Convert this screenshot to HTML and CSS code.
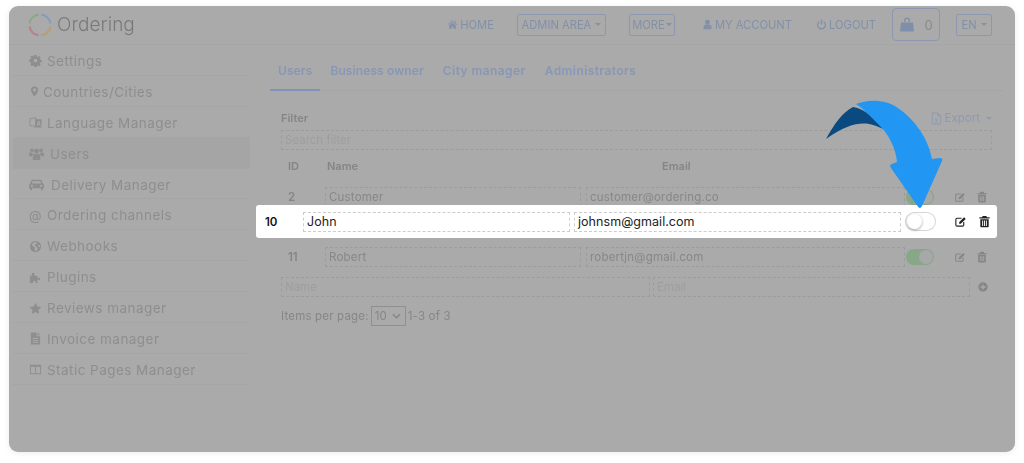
FILE: index.html
```html
<!DOCTYPE html>
<html lang="en">
<head>
<meta charset="utf-8">
<title>Ordering</title>
<link rel="stylesheet" href="styles.css">
</head>
<body>
<svg class="sprite" width="0" height="0">
  <symbol id="i-home" viewBox="0 0 14 14"><path d="M7 1.500 1 6.800l.7.800L7 3l5.300 4.600.7-.8-2-1.800V2.200H10v1.900zM2.800 8v4.500h3.200V9.500h2v3h3.200V8L7 4.300z"/></symbol>
  <symbol id="i-user" viewBox="0 0 14 14"><circle cx="7" cy="4" r="3"/><path d="M2 13V9.500C2 8 3.500 7 5 7h4c1.500 0 3 1 3 2.500V13z"/></symbol>
  <symbol id="i-power" viewBox="0 0 14 14"><path d="M6.100 1h1.800v6H6.100zM4.200 2.700v2A4 4 0 1 0 9.800 4.700v-2a5.700 5.700 0 1 1-5.600 0z"/></symbol>
  <symbol id="i-bag" viewBox="0 0 16 16"><path d="M5 5V3.500a3 3 0 0 1 6 0V5h-1.300V3.500a1.700 1.700 0 0 0-3.400 0V5zM2 5.500h12l1 9H1z"/></symbol>
  <symbol id="i-cog" viewBox="0 0 14 14"><path fill-rule="evenodd" d="M5.800 1h2.400l.3 1.700 1 .4 1.400-1 1.700 1.700-1 1.400.4 1 1.700.3v2.400l-1.700.3-.4 1 1 1.400-1.700 1.700-1.400-1-1 .4-.3 1.700H5.800l-.3-1.700-1-.4-1.400 1-1.700-1.700 1-1.400-.4-1L.3 8.200V5.800l1.700-.3.4-1-1-1.400 1.700-1.700 1.400 1 1-.4zM7 5a2 2 0 1 0 0 4 2 2 0 0 0 0-4z"/></symbol>
  <symbol id="i-pin" viewBox="0 0 14 14"><path fill-rule="evenodd" d="M7 .5a4.500 4.500 0 0 1 4.500 4.500C11.500 8 7 13.500 7 13.500S2.500 8 2.500 5A4.500 4.500 0 0 1 7 .5zM7 3a2 2 0 1 0 0 4 2 2 0 0 0 0-4z"/></symbol>
  <symbol id="i-lang" viewBox="0 0 16 14"><path d="M1 2.500 8 1v11L1 10.500z" fill="none" stroke="currentColor"/><path fill-rule="evenodd" d="M8 3h7.500v10H6.500l1-1.500zm3.300 2-2 6h1.300l.4-1.300h2l.4 1.300h1.300l-2-6zm.7 1.500.7 2.200h-1.400z"/></symbol>
  <symbol id="i-users" viewBox="0 0 16 14"><circle cx="8" cy="4.500" r="2.600"/><circle cx="3" cy="3.500" r="2"/><circle cx="13" cy="3.500" r="2"/><path d="M4 14V10c0-1.500 1-2.500 2.500-2.500h3C11 7.500 12 8.500 12 10v4zM0 9V7.500C0 6.500.8 6 1.800 6h1.700c.4 1 1 1.500 1.500 1.800C3.800 8.200 3.200 8.800 3 10H0zM16 9V7.500C16 6.500 15.200 6 14.200 6h-1.700c-.4 1-1 1.500-1.500 1.800 1.200.4 1.800 1 2 2.200h3z"/></symbol>
  <symbol id="i-car" viewBox="0 0 16 14"><path fill-rule="evenodd" d="M3.500 2h9c.6 0 1 .3 1.200.9L14.800 6c.7.3 1.200 1 1.200 1.800V11h-1.200v1.500a1 1 0 0 1-2 0V11H3.200v1.500a1 1 0 0 1-2 0V11H0V7.800C0 7 .5 6.300 1.200 6l1.100-3.100C2.500 2.300 2.900 2 3.500 2zM3.800 3.500 3 6h10l-.8-2.500zM3 7.300a1.200 1.200 0 1 0 0 2.400 1.200 1.200 0 0 0 0-2.400zm10 0a1.200 1.200 0 1 0 0 2.400 1.200 1.200 0 0 0 0-2.400z"/></symbol>
  <symbol id="i-globe" viewBox="0 0 14 14"><path fill-rule="evenodd" d="M7 1a6 6 0 1 1 0 12A6 6 0 0 1 7 1zM4 3.500 3 5.500l2 1.500 1.500 1-.5 3 2 1 1.500-3-2-2L6 5l2-1 1-1.500C7 2 5 2.500 4 3.500zM10 5l-.5 1.500 2 1.500.5-2z"/></symbol>
  <symbol id="i-puzzle" viewBox="0 0 14 14"><path d="M1 5h2.500c-.8-1 -.8-3 1-3s1.800 2 1 3H9v2.800c1-.7 3-.7 3 .7s-2 1.400-3 .7V13H6.800c.7-1 .7-2.400-1-2.400S4 12 4.800 13H1z"/></symbol>
  <symbol id="i-star" viewBox="0 0 14 14"><path d="m7 .8 1.900 4 4.400.6-3.200 3.100.8 4.400L7 10.800l-3.900 2.100.8-4.400L.7 5.400l4.400-.6z"/></symbol>
  <symbol id="i-file" viewBox="0 0 14 14"><path fill-rule="evenodd" d="M2 .5h6v4h4v9H2zM9 .5l3 3H9zM4 6.500v1h6v-1zm0 2v1h6v-1zm0 2v1h6v-1z"/></symbol>
  <symbol id="i-columns" viewBox="0 0 14 14"><path fill-rule="evenodd" d="M1 2h12v10H1zm1 2v7h4.500V4zm5.500 0v7H12V4z"/></symbol>
  <symbol id="i-edit" viewBox="0 0 14 14"><path d="M10.500 7.500v3.200c0 .8-.6 1.300-1.300 1.300H3.300c-.8 0-1.300-.5-1.300-1.300V4.800c0-.8.500-1.300 1.300-1.300h4.700" fill="none" stroke="currentColor" stroke-width="1.200"/><path d="M5.500 9.500V7.700L10.800 2.400l1.800 1.800L7.300 9.500z"/></symbol>
  <symbol id="i-trash" viewBox="0 0 14 14"><path fill-rule="evenodd" d="M5 1h4l.6 1.500H12.500v1.300h-11V2.500h2.900zM2.500 4.500h9V12c0 .8-.5 1.300-1.200 1.300H3.700c-.7 0-1.200-.5-1.200-1.300zM4.500 6v5.800h1V6zm2 0v5.800h1V6zm2 0v5.800h1V6z"/></symbol>
  <symbol id="i-plus" viewBox="0 0 14 14"><path fill-rule="evenodd" d="M7 1.500a5.500 5.500 0 1 1 0 11 5.500 5.500 0 0 1 0-11zM6.200 4v2.200H4v1.600h2.200V10h1.600V7.800H10V6.200H7.800V4z"/></symbol>
  <symbol id="i-xls" viewBox="0 0 14 14"><path d="M2.500 1h6l3 3v9h-9z" fill="none" stroke="currentColor"/><path d="M8.500 1v3h3" fill="none" stroke="currentColor"/><path d="m4.800 6.500 1.500 2.300-1.600 2.400h1l1-1.600 1 1.600h1.100L7.200 8.800l1.500-2.300h-1L6.800 8l-1-1.500z"/></symbol>
</svg>

<div class="card">
  <header class="topbar">
    <a class="brand">
      <svg class="logo" viewBox="0 0 26 26" width="26" height="26">
        <path d="M14.500 2.600A10.500 10.500 0 0 1 23.400 11.500" class="arc arc-blue"/>
        <path d="M23.400 14.500A10.500 10.500 0 0 1 14.500 23.400" class="arc arc-tan"/>
        <path d="M11.500 23.400A10.500 10.500 0 0 1 2.600 14.500" class="arc arc-pink"/>
        <path d="M2.600 11.500A10.500 10.500 0 0 1 11.500 2.600" class="arc arc-green"/>
      </svg>
      <span class="brand-name">Ordering</span>
    </a>
    <nav class="nav">
      <a class="nav-link nav-home"><svg class="ic"><use href="#i-home"/></svg>HOME</a>
      <a class="nav-btn nav-admin">ADMIN AREA<i class="caret"></i></a>
      <a class="nav-btn nav-more">MORE<i class="caret"></i></a>
      <a class="nav-link nav-account"><svg class="ic"><use href="#i-user"/></svg>MY ACCOUNT</a>
      <a class="nav-link nav-logout"><svg class="ic"><use href="#i-power"/></svg>LOGOUT</a>
      <a class="nav-cart"><svg class="ic-bag"><use href="#i-bag"/></svg><span>0</span></a>
      <a class="nav-btn nav-lang">EN<i class="caret"></i></a>
    </nav>
  </header>

  <div class="body">
    <aside class="side">
      <a class="side-item"><svg class="side-ic"><use href="#i-cog"/></svg>Settings</a>
      <a class="side-item"><svg class="side-ic narrow"><use href="#i-pin"/></svg>Countries/Cities</a>
      <a class="side-item"><svg class="side-ic"><use href="#i-lang"/></svg>Language Manager</a>
      <a class="side-item active"><svg class="side-ic people"><use href="#i-users"/></svg>Users</a>
      <a class="side-item"><svg class="side-ic wide"><use href="#i-car"/></svg>Delivery Manager</a>
      <a class="side-item"><span class="side-at">@</span>Ordering channels</a>
      <a class="side-item"><svg class="side-ic"><use href="#i-globe"/></svg>Webhooks</a>
      <a class="side-item"><svg class="side-ic"><use href="#i-puzzle"/></svg>Plugins</a>
      <a class="side-item"><svg class="side-ic"><use href="#i-star"/></svg>Reviews manager</a>
      <a class="side-item"><svg class="side-ic"><use href="#i-file"/></svg>Invoice manager</a>
      <a class="side-item"><svg class="side-ic"><use href="#i-columns"/></svg>Static Pages Manager</a>
    </aside>

    <main class="main">
      <div class="tabs">
        <a class="tab tab-on">Users</a>
        <a class="tab">Business owner</a>
        <a class="tab tab-wide">City manager</a>
        <a class="tab tab-wide">Administrators</a>
      </div>
      <div class="filter-head">
        <span class="filter-label">Filter</span>
        <a class="export"><svg class="ic-x"><use href="#i-xls"/></svg>Export<i class="caret"></i></a>
      </div>
      <div class="field field-search">Search filter</div>
      <div class="thead"><span>ID</span><span>Name</span><span>Email</span></div>
      <div class="row">
        <span class="id">2</span>
        <span class="field val">Customer</span>
        <span class="field val">customer@ordering.co</span>
        <span class="toggle on"></span>
        <svg class="act"><use href="#i-edit"/></svg>
        <svg class="act"><use href="#i-trash"/></svg>
      </div>
      <div class="row row-after">
        <span class="id">11</span>
        <span class="field val">Robert</span>
        <span class="field val">robertjn@gmail.com</span>
        <span class="toggle on"></span>
        <svg class="act"><use href="#i-edit"/></svg>
        <svg class="act"><use href="#i-trash"/></svg>
      </div>
      <div class="new-row">
        <span class="field ph">Name</span>
        <span class="field ph">Email</span>
        <svg class="plus"><use href="#i-plus"/></svg>
      </div>
      <div class="pager">
        <span>Items per page:</span>
        <span class="select">10<svg class="chev" viewBox="0 0 10 6"><path d="M1 1l4 4 4-4" fill="none" stroke="currentColor" stroke-width="1.600"/></svg></span>
        <span>1-3 of 3</span>
      </div>
    </main>
  </div>
</div>

<div class="spot">
  <b class="spot-id">10</b>
  <span class="spot-field spot-name">John</span>
  <span class="spot-field spot-mail">johnsm@gmail.com</span>
  <span class="toggle off"></span>
  <svg class="spot-act edit"><use href="#i-edit"/></svg>
  <svg class="spot-act trash"><use href="#i-trash"/></svg>
</div>

<svg class="arrow" viewBox="0 0 130 115" width="130" height="115">
  <path class="arrow-dark" d="M6 39C14 24 23 12 33 7C45 9 55 18 63 29C50 22 35 18 6 39Z"/>
  <path class="arrow-blue" d="M36 4C48 -1 66 -1 78 8C95 20 108 38 112 59L120 58Q123 58 122 61L102 106Q100 110 97.500 106L71 68Q69 65 72 64L77 62C76 48 68 33 58 24C50 16 44 9 36 4Z"/>
</svg>
</body>
</html>
```
FILE: styles.css
```css
* { box-sizing: border-box; }
html, body { margin: 0; height: 463px; overflow: hidden; background: #fff; }
body { padding: 6px 9px; position: relative; font-family: Inter, "Open Sans", sans-serif; color: #8b8b8b; }
.sprite { position: absolute; }
svg { fill: currentColor; display: block; flex: none; }

.card { width: 1006px; height: 446px; background: #aaa; border-radius: 9px; box-shadow: 0 1px 6px rgba(0,0,0,.08); overflow: hidden; }

.topbar { height: 39px; display: flex; align-items: center; justify-content: space-between; border-bottom: 1px solid #a5a5a5; padding: 0 23px 0 18px; filter: blur(.35px); }
.brand { display: flex; align-items: center; gap: 4px; margin-top: -1px; }
.logo { fill: none; }
.arc { fill: none; stroke-width: 2.200; }
.arc-blue { stroke: #7f9fc0; }
.arc-tan { stroke: #b89e72; }
.arc-pink { stroke: #b5808f; }
.arc-green { stroke: #8aa98a; }
.brand-name { font-size: 19px; font-weight: 300; color: #7a7a7a; letter-spacing: .05px; }

.nav { display: flex; align-items: center; font-size: 11.200px; color: #8290a8; margin-top: -1px; white-space: nowrap; }
.nav-link { display: flex; align-items: center; gap: 2px; }
.ic { width: 11px; height: 11px; }
.nav-btn { display: flex; align-items: center; justify-content: center; gap: 4px; height: 22px; border: 1px solid #8b98af; border-radius: 2px; }
.caret { display: inline-block; border: 3px solid transparent; border-top-color: currentColor; border-bottom: 0; }
.nav-admin { margin-left: 23px; width: 89px; }
.nav-more { margin-left: 23px; width: 46px; gap: 1px; }
.nav-account { margin-left: 27px; }
.nav-logout { margin-left: 24px; }
.nav-cart { margin-left: 16px; width: 48px; height: 33px; border: 1px solid #8b98af; border-radius: 4px; display: flex; align-items: center; justify-content: center; gap: 9px; font-size: 13px; color: #8a8a8a; }
.ic-bag { width: 16px; height: 16px; color: #7f8ea9; }
.nav-lang { margin-left: 16px; width: 36px; gap: 4px; }

.body { display: flex; height: 407px; filter: blur(.35px); }
.side { width: 241px; flex: none; padding: 0 0 0 4px; }
.side-item { height: 30.900px; display: flex; align-items: center; padding: 2px 0 0 16px; font-size: 13.500px; letter-spacing: .45px; color: #8e8e8e; border-bottom: 1px solid #a5a5a5; }
.side-item.active { background: #a5a5a5; }
.side-ic { width: 13px; height: 13px; margin-right: 5px; }
.side-ic.narrow { width: 11px; margin-right: 3px; }
.side-ic.wide { width: 15px; margin-right: 7px; }
.side-ic.people { width: 15px; margin-right: 6px; }
.side-at { width: 12px; margin-right: 6px; font-size: 13px; }

.main { flex: 1; padding: 0 23px 0 31px; min-width: 0; }
.tabs { display: flex; gap: 2px; height: 46px; margin: 0 -12px 0 -11px; border-bottom: 1px solid #a5a5a5; font-size: 12px; font-weight: 600; color: #8797b5; }
.tab { padding: 7px 8px 0; height: 46px; display: flex; align-items: center; border-bottom: 2px solid transparent; letter-spacing: .1px; }
.tab-wide { letter-spacing: .42px; margin-left: 1px; }
.tab-on { border-bottom-color: #7f93b8; }

.filter-head { display: flex; justify-content: space-between; align-items: center; margin-top: 17px; height: 20px; font-size: 11px; }
.filter-label { font-weight: 600; color: #858585; }
.export { display: flex; align-items: center; gap: 2px; color: #8c9ab3; font-size: 11.500px; }
.ic-x { width: 13px; height: 13px; }
.export .caret { margin-left: 4px; }

.field { display: block; border: 1px dashed #9c9c9c; height: 20px; font-size: 11.500px; line-height: 18px; padding-left: 3px; white-space: nowrap; overflow: hidden; }
.field-search { color: #9e9e9e; width: 711px; margin-top: 2px; }
.thead { display: grid; grid-template-columns: 39px 335px 1fr; height: 18px; margin-top: 7px; padding-left: 7px; font-size: 11px; font-weight: 600; color: #858585; align-items: center; }

.row { display: grid; grid-template-columns: 44px 256px 325px 29px 31px 23px; margin-top: 12px; height: 20px; align-items: center; }
.row .field:nth-child(3) { margin-left: 5px; width: 319px; }
.row-after { margin-top: 40px; }
.id { padding-left: 7px; font-size: 11.500px; font-weight: 600; color: #858585; }
.val { color: #878787; letter-spacing: .2px; }
.act { width: 12px; height: 12px; color: #868686; justify-self: end; }
.act:last-child { margin-right: 1px; }

.toggle { display: block; width: 28px; height: 16px; border-radius: 9px; position: relative; }
.toggle::after { content: ""; position: absolute; width: 14px; height: 14px; border-radius: 50%; top: 1px; }
.toggle.on { background: #88a688; }
.toggle.on::after { right: 1px; background: #a8a8a8; }
.toggle.off { background: #fff; box-shadow: 0 0 0 1px #d6d6d6; width: 29px; height: 17px; margin-left: 1px; }
.toggle.off::after { left: 1px; background: #fff; box-shadow: 0 1px 3px rgba(0,0,0,.35); width: 15px; height: 15px; }

.new-row { display: grid; grid-template-columns: 369px 317px 16px; column-gap: 3px; margin-top: 10px; align-items: center; }
.ph { color: #9e9e9e; }
.plus { width: 12px; height: 12px; color: #868686; justify-self: end; }

.pager { display: flex; align-items: center; gap: 2px; margin-top: 9px; font-size: 11.500px; color: #868686; letter-spacing: .18px; }
.select { width: 35px; height: 20px; border: 1px solid #8f8f8f; display: flex; align-items: center; justify-content: space-between; padding: 0 4px 0 3px; }
.chev { width: 9px; height: 6px; }

.spot { position: absolute; left: 256px; top: 205px; width: 741px; height: 33px; background: #fff; border-radius: 3px; display: flex; align-items: center; color: #222; font-size: 12px; }
.spot-id { width: 47px; padding-left: 9px; font-size: 11.500px; font-weight: 600; color: #111; }
.spot-field { border: 1px dashed #ccc; height: 20px; line-height: 18px; padding-left: 3px; font-size: 12.500px; letter-spacing: .05px; }
.spot-name { width: 267px; }
.spot-mail { width: 327px; margin: 0 4px; }
.spot-act { width: 13px; height: 13px; color: #222; }
.spot-act.edit { margin-left: 19px; }
.spot-act.trash { margin-left: 11px; }

.arrow { position: absolute; left: 820px; top: 100px; overflow: visible; }
.arrow-dark { fill: #0b4a80; }
.arrow-blue { fill: #2196f3; }
```
